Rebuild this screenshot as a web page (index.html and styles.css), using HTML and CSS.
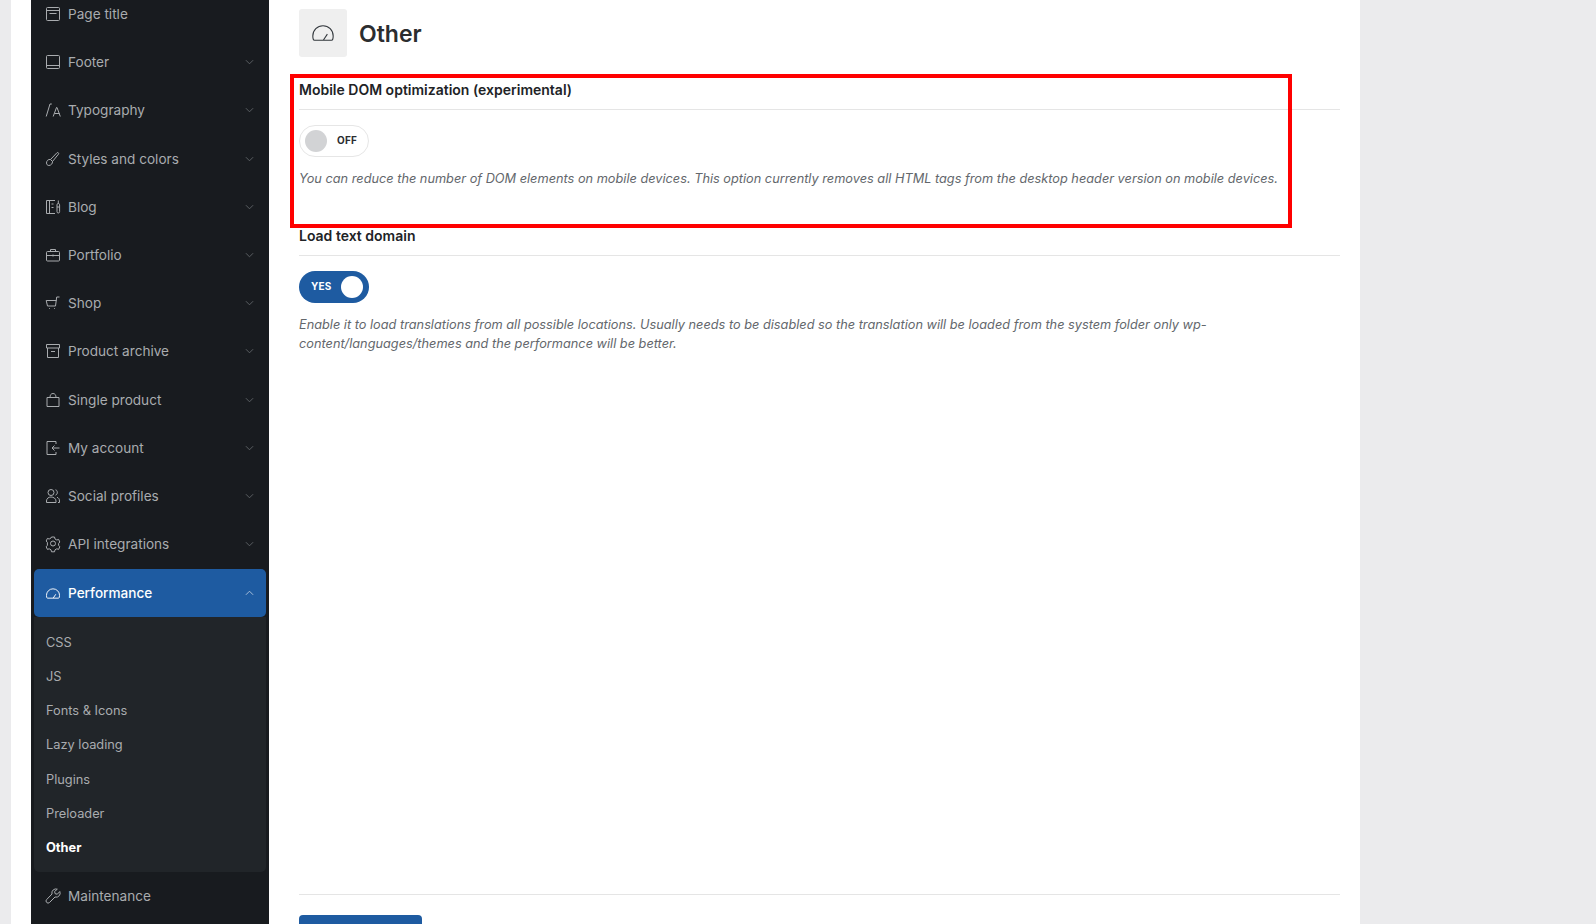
FILE: index.html
```html
<!DOCTYPE html>
<html lang="en">
<head>
<meta charset="utf-8">
<title>Other</title>
<link rel="stylesheet" href="styles.css">
</head>
<body>
<svg class="defs" width="0" height="0" aria-hidden="true">
  <symbol id="chev" viewBox="0 0 10 6"><path d="M1 1l4 4 4-4"/></symbol>
  <symbol id="chevup" viewBox="0 0 10 6"><path d="M1 5l4-4 4 4"/></symbol>
  <symbol id="gauge" viewBox="0.500 2 15 11"><path d="M2.200 12.500h11.600c.4 0 .8-.3.9-.7.2-.7.3-1.500.3-2.300a7 7 0 0 0-14 0c0 .8.100 1.600.3 2.300.1.400.5.700.9.700zM8.300 12.300l2.700-4"/></symbol>
</svg>
<div class="shell">
  <nav class="sidebar">
    <ul class="menu">
      <li class="item"><svg class="ic" viewBox="1 1 14 14"><rect x="1.500" y="1.500" width="13" height="13" rx="1"/><path d="M1.500 4.500h13M4.500 7.500h7"/></svg><span class="label">Page title</span></li>
      <li class="item"><svg class="ic" viewBox="1 1 14 14"><rect x="1.500" y="1.500" width="13" height="13" rx="1"/><path d="M1.500 11.500h13"/></svg><span class="label">Footer</span><svg class="chev"><use href="#chev"/></svg></li>
      <li class="item"><svg class="ic" viewBox="1 1 14 14"><path d="M1.200 14.500L5 2h1.800M8.200 14.500l3.300-9h.5l3.300 9M9.500 11.500h5"/></svg><span class="label">Typography</span><svg class="chev"><use href="#chev"/></svg></li>
      <li class="item"><svg class="ic" viewBox="1 1 14 14"><path d="M5.500 8.500L12 1.700c.8-.7 2.200.500 1.500 1.400L7.500 10.500M5.500 8.500c-2.500-.5-4 1.500-4 3.500 0 1.300 1 2.500 2.300 2.500 2.200 0 3.900-2 3.700-4z"/></svg><span class="label">Styles and colors</span><svg class="chev"><use href="#chev"/></svg></li>
      <li class="item"><svg class="ic" viewBox="1 1 14 14"><path d="M10 1.500H1.500v13H10M4.500 1.500v13M6.500 5h2M6.500 8.500h2"/><rect x="12" y="4.500" width="2.600" height="9.500" rx="1.300"/><path d="M13.300 1.500v3M12 8h2.600"/></svg><span class="label">Blog</span><svg class="chev"><use href="#chev"/></svg></li>
      <li class="item"><svg class="ic" viewBox="1 1 14 14"><rect x="1.500" y="4.500" width="13" height="9.500" rx="1"/><path d="M5.500 4.500V2.500h5v2M1.500 8.500h13M8 7.500v2"/></svg><span class="label">Portfolio</span><svg class="chev"><use href="#chev"/></svg></li>
      <li class="item"><svg class="ic" viewBox="1 1 14 14"><path d="M1.200 5.500h10.300M1.200 5.500l1.300 5.500h8l1.200-9h2.800M4 13.500h.8M9 13.500h.8"/></svg><span class="label">Shop</span><svg class="chev"><use href="#chev"/></svg></li>
      <li class="item"><svg class="ic" viewBox="1 1 14 14"><path d="M1.500 1.500h13v3.500h-13zM2.500 5v9.500h11V5M6 8.500h4"/></svg><span class="label">Product archive</span><svg class="chev"><use href="#chev"/></svg></li>
      <li class="item"><svg class="ic" viewBox="1 1 14 14"><path d="M2 5.500h12v9H2zM5 5.500C5 3 6 1.500 8 1.500s3 1.500 3 4"/></svg><span class="label">Single product</span><svg class="chev"><use href="#chev"/></svg></li>
      <li class="item"><svg class="ic" viewBox="1 1 14 14"><path d="M11 4V1.500H2v13h9V12M14.500 8H7M9.500 5.500L7 8l2.500 2.500"/></svg><span class="label">My account</span><svg class="chev"><use href="#chev"/></svg></li>
      <li class="item"><svg class="ic" viewBox="1 1 14 14"><circle cx="6" cy="4.500" r="3"/><path d="M1.500 14.500v-1.500c0-2.500 2-4 4.500-4s5 1.500 5 4v1.500zM10.500 1.800c2 .1 2.800 4.400 0 5.400M12 9.300c1.600.5 2.500 1.800 2.500 3.700v1.500h-1.500"/></svg><span class="label">Social profiles</span><svg class="chev"><use href="#chev"/></svg></li>
      <li class="item"><svg class="ic" viewBox="1 1 14 14"><path d="M6.500 1.500h3l.5 2 1.800 1 1.800-.6 1.200 2.600-1.200 1.500v1.800l1.200 1.500-1.200 2.600-1.800-.6-1.800 1-.5 2h-3l-.5-2-1.800-1-1.800.6-1.200-2.600 1.200-1.500V7L1.200 5.500 2.400 2.900l1.800.6 1.800-1z" transform="translate(0 -.5)"/><circle cx="8" cy="7.500" r="2.500"/></svg><span class="label">API integrations</span><svg class="chev"><use href="#chev"/></svg></li>
      <li class="item active"><svg class="ic gauge-sm"><use href="#gauge"/></svg><span class="label">Performance</span><svg class="chev"><use href="#chevup"/></svg></li>
      <li class="sub">
        <a>CSS</a><a>JS</a><a>Fonts &amp; Icons</a><a>Lazy loading</a><a>Plugins</a><a>Preloader</a><a class="current">Other</a>
      </li>
      <li class="item"><svg class="ic" viewBox="1 1 14 14"><path d="M14.800 3.500l-2.500 2.700-2.200-.5-.5-2.200L12.300 1.200A4 4 0 0 0 7 6l-5.300 5.500a2 2 0 0 0 2.800 3L10 9a4 4 0 0 0 4.800-5.500z"/></svg><span class="label">Maintenance</span></li>
    </ul>
  </nav>
  <main class="content">
    <header class="head">
      <div class="head-icon"><svg class="gauge-lg"><use href="#gauge"/></svg></div>
      <h1 class="title">Other</h1>
    </header>
    <section class="field">
      <h2 class="field-title">Mobile DOM optimization (experimental)</h2>
      <div class="toggle off"><span class="knob"></span><span class="state">OFF</span></div>
      <p class="desc">You can reduce the number of DOM elements on mobile devices. This option currently removes all HTML tags from the desktop header version on mobile devices.</p>
    </section>
    <section class="field">
      <h2 class="field-title">Load text domain</h2>
      <div class="toggle on"><span class="state">YES</span><span class="knob"></span></div>
      <p class="desc wrap">Enable it to load translations from all possible locations. Usually needs to be disabled so the translation will be loaded from the system folder only wp-content/languages/themes and the performance will be better.</p>
    </section>
    <footer class="foot"><button class="save" type="button"></button></footer>
    <div class="marker"></div>
  </main>
  <div class="rest"></div>
</div>
</body>
</html>
```
FILE: styles.css
```css
* { box-sizing: border-box; }
html, body { margin: 0; height: 924px; overflow: hidden; }
body { background: #ebebed; font-family: Inter, "Liberation Sans", sans-serif; }
.defs { position: absolute; }
.shell { display: flex; height: 924px; margin-left: 11px; }
.sidebar { width: 258px; border-left: 20px solid #fff; background: #181b1f; flex: none; overflow: hidden; }
.menu { list-style: none; margin: -10px 0 0; padding: 0 3px; }
.item { display: flex; align-items: center; height: 48.2px; padding-left: 12px; padding-right: 12px; color: #a9acaf; font-size: 13.6px; font-weight: 400; }
.ic { width: 14px; height: 14px; flex: none; margin-right: 8px; fill: none; stroke: #a9acaf; stroke-width: 1; overflow: visible; }
.gauge-sm { height: 11px; stroke-width: 1; }
.label { flex: 1; }
.chev { width: 9px; height: 6px; flex: none; fill: none; stroke: #62666a; stroke-width: 1; }
.item.active { background: #1e5ba1; color: #fff; border-radius: 5px; height: 48px; margin-top: 1px; font-weight: 500; }
.item.active .ic { stroke: #fff; }
.item.active .chev { stroke: #b3c7df; }
.sub { display: flex; flex-direction: column; height: 255px; padding: 8px 12px 0; background: #212529; border-radius: 0 0 5px 5px; }
.sub a { display: flex; align-items: center; height: 34.2px; color: #a9acaf; font-size: 12.8px; }
.sub a.current { color: #fff; font-weight: 700; }
.content { position: relative; flex: none; width: 1091px; height: 924px; background: #fff; padding: 9px 20px 0 30px; display: flex; flex-direction: column; }
.head { display: flex; align-items: center; height: 48px; gap: 12px; margin-bottom: 20px; }
.head-icon { width: 48px; height: 48px; border-radius: 3px; background: #efefef; display: flex; align-items: center; justify-content: center; }
.gauge-lg { width: 22px; height: 16px; fill: none; stroke: #33383d; stroke-width: .75; overflow: visible; }
.title { margin: 0; padding-top: 1px; font-size: 23px; line-height: 30px; font-weight: 600; color: #2b2d2f; }
.field { display: block; height: 146px; }
.field-title { margin: 0; height: 33px; padding-top: 4px; border-bottom: 1px solid #e5e5e5; font-size: 14px; line-height: 18px; font-weight: 600; color: #212326; }
.toggle { display: flex; align-items: center; width: 70px; height: 32px; margin-top: 15px; border-radius: 16px; font-size: 10px; font-weight: 700; }
.toggle.off { border: 1px solid #e6e6e6; padding-left: 5px; gap: 10px; color: #2b2d2f; }
.toggle.on { background: #1e5ba1; color: #fff; padding-left: 12px; gap: 8px; }
.knob { width: 22px; height: 22px; border-radius: 50%; flex: none; }
.off .knob { background: #d2d3d5; }
.on .knob { background: #fff; }
.state { display: block; width: 22px; padding-bottom: 2px; letter-spacing: .2px; }
.desc { margin: 12px 0 0; font-size: 12.76px; line-height: 19px; font-style: italic; color: #63676c; }
.desc.wrap { width: 925px; }
.foot { margin-top: auto; height: 30px; border-top: 1px solid #e5e5e5; padding-top: 20px; }
.save { display: block; width: 123px; height: 40px; border: 0; border-radius: 4px 4px 0 0; background: #1e5ba1; }
.marker { position: absolute; left: 21px; top: 74px; width: 1002px; height: 154px; border: 4px solid #f00; pointer-events: none; }
.rest { flex: 1; }
```
